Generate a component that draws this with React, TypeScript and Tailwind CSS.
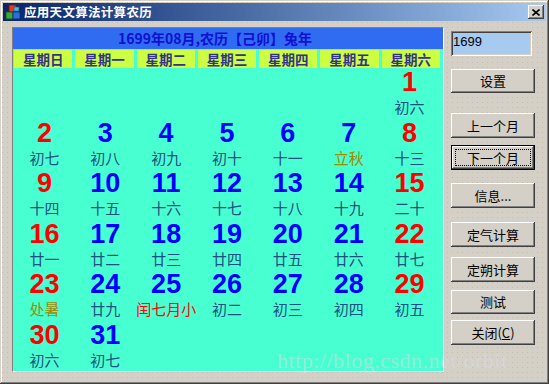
import React from "react"

type Day = { d: number; l: string; kind?: "term" | "leap" }

const rows: (Day | null)[][] = [
  [null, null, null, null, null, null, { d: 1, l: "初六" }],
  [{ d: 2, l: "初七" }, { d: 3, l: "初八" }, { d: 4, l: "初九" }, { d: 5, l: "初十" }, { d: 6, l: "十一" }, { d: 7, l: "立秋", kind: "term" }, { d: 8, l: "十三" }],
  [{ d: 9, l: "十四" }, { d: 10, l: "十五" }, { d: 11, l: "十六" }, { d: 12, l: "十七" }, { d: 13, l: "十八" }, { d: 14, l: "十九" }, { d: 15, l: "二十" }],
  [{ d: 16, l: "廿一" }, { d: 17, l: "廿二" }, { d: 18, l: "廿三" }, { d: 19, l: "廿四" }, { d: 20, l: "廿五" }, { d: 21, l: "廿六" }, { d: 22, l: "廿七" }],
  [{ d: 23, l: "处暑", kind: "term" }, { d: 24, l: "廿九" }, { d: 25, l: "闰七月小", kind: "leap" }, { d: 26, l: "初二" }, { d: 27, l: "初三" }, { d: 28, l: "初四" }, { d: 29, l: "初五" }],
  [{ d: 30, l: "初六" }, { d: 31, l: "初七" }, null, null, null, null, null],
]

const weekdays = ["星期日", "星期一", "星期二", "星期三", "星期四", "星期五", "星期六"]

const bevel =
  "shadow-[inset_-1px_-1px_#404040,inset_1px_1px_#ffffff,inset_-2px_-2px_#808080,inset_2px_2px_#d4d0c8]"

const buttons = [
  { label: "设置", cls: "mt-[13px] h-[24px]" },
  { label: "上一个月", cls: "mt-[20px] h-[25px]" },
  { label: "下一个月", cls: "mt-[7px] h-[25px]", focus: true },
  { label: "信息...", cls: "mt-[13px] h-[25px]" },
  { label: "定气计算", cls: "mt-[14px] h-[25px]" },
  { label: "定朔计算", cls: "mt-[10px] h-[25px]" },
  { label: "测试", cls: "mt-[8px] h-[24px]" },
  { label: "关闭(C)", cls: "mt-[6px] h-[25px]" },
]

const AppIcon = () => (
  <svg width="16" height="16" viewBox="0 0 16 16">
    <rect x="4" y="1" width="7" height="7" fill="#e03a2a" stroke="#7a1208" strokeWidth="0.8" />
    <rect x="1" y="8" width="7" height="7" fill="#3aa83a" stroke="#145014" strokeWidth="0.8" />
    <rect x="8" y="8" width="7" height="7" fill="#2a6ee0" stroke="#0c2a70" strokeWidth="0.8" />
    <rect x="9" y="3" width="5" height="4" fill="#40c0e0" stroke="#105070" strokeWidth="0.6" />
  </svg>
)

const Cell = ({ day, col }: { day: Day | null; col: number }) => {
  if (!day) return <div />
  const weekend = col === 0 || col === 6
  let lunarColor = "text-[#1c5080]"
  if (day.kind === "term") lunarColor = "text-[#9c8c00]"
  if (day.kind === "leap") lunarColor = "text-[#ff0000]"
  return (
    <div className="flex flex-col items-center pt-[1px]">
      <div
        className={`font-['Liberation_Sans',sans-serif] font-bold text-[27px] leading-[27px] ${
          weekend ? "text-[#ff0000]" : "text-[#0000ff]"
        }`}
      >
        {day.d}
      </div>
      <div className={`mt-[3px] text-[15px] leading-[16px] whitespace-nowrap ${lunarColor}`}>{day.l}</div>
    </div>
  )
}

export default function App() {
  return (
    <div className="relative w-[549px] h-[384px] overflow-hidden bg-[#d4d0c8] bg-[radial-gradient(#c8bda2_0.5px,transparent_0.8px)] bg-[size:5px_5px] shadow-[inset_-1px_-1px_#404040,inset_1px_1px_#d4d0c8,inset_-2px_-2px_#808080,inset_2px_2px_#ffffff] font-['Noto_Sans_CJK_SC',sans-serif] p-[3px]">
      {/* title bar */}
      <div className="h-[18px] flex items-center bg-gradient-to-r from-[#0a246a] to-[#a6caf0] pl-[2px] pr-[2px]">
        <AppIcon />
        <span className="ml-[3px] text-white font-bold text-[12.5px] leading-[18px] tracking-[0.3px]">应用天文算法计算农历</span>
        <div className={`ml-auto w-[16px] h-[14px] bg-[#d4d0c8] ${bevel} flex items-center justify-center`}>
          <svg width="8" height="7" viewBox="0 0 8 7">
            <path d="M0.5 0.5 L7.5 6.5 M7.5 0.5 L0.5 6.5" stroke="#000" strokeWidth="1.6" />
          </svg>
        </div>
      </div>

      <div className="flex pl-[9px]">
        {/* calendar panel */}
        <div className="mt-[6px] w-[432px] h-[345px] flex flex-col border border-t-[#808080] border-l-[#808080] border-b-white border-r-white bg-[#48ffd2]">
          <div className="h-[21px] flex items-center justify-center pr-[26px] bg-[#2f6cf2] text-[#1010d0] font-bold text-[14px] leading-[21px] whitespace-nowrap">
            1699年08月,农历【己卯】兔年
          </div>
          <div className="mt-[1px] h-[18px] grid grid-cols-7 gap-[3px] pl-[1px] pr-[3px]">
            {weekdays.map((w) => (
              <div key={w} className="bg-[#ccff44] flex items-center justify-center text-[#33338a] font-bold text-[13.5px] leading-[18px]">
                {w}
              </div>
            ))}
          </div>
          <div className="flex-1 grid grid-cols-7 grid-rows-6 pl-[1px] pr-[3px]">
            {rows.flatMap((r, ri) => r.map((d, ci) => <Cell key={`${ri}-${ci}`} day={d} col={ci} />))}
          </div>
        </div>

        {/* right controls */}
        <div className="ml-[7px] w-[84px] flex flex-col">
          <div className="mt-[10px] w-[81px] h-[25px] bg-[#a6caf0] shadow-[inset_1px_1px_#808080,inset_-1px_-1px_#ffffff,inset_2px_2px_#404040,inset_-2px_-2px_#d4d0c8] pl-[2px] pt-[3px] font-['Liberation_Sans',sans-serif] text-[13px] leading-[16px] text-black">
            1699
          </div>
          {buttons.map((b) =>
            b.focus ? (
              <div key={b.label} className={`${b.cls} border border-black bg-[#d4d0c8] p-0`}>
                <div className={`h-full ${bevel} p-[3px]`}>
                  <div className="h-full border border-dotted border-black flex items-center justify-center text-[13px] text-black">
                    {b.label}
                  </div>
                </div>
              </div>
            ) : (
              <div key={b.label} className={`${b.cls} bg-[#d4d0c8] ${bevel} flex items-center justify-center text-[13px] text-black`}>
                {b.label === "关闭(C)" ? (
                  <span>
                    关闭(<span className="underline">C</span>)
                  </span>
                ) : (
                  b.label
                )}
              </div>
            )
          )}
        </div>
      </div>

      {/* watermark */}
      <div className="absolute left-[277px] top-[349px] font-['Liberation_Serif',serif] text-[22px] leading-[24px] text-[rgba(220,220,220,0.5)] tracking-[0.5px] whitespace-nowrap pointer-events-none">
        http://blog.csdn.net/orbit
      </div>
    </div>
  )
}
